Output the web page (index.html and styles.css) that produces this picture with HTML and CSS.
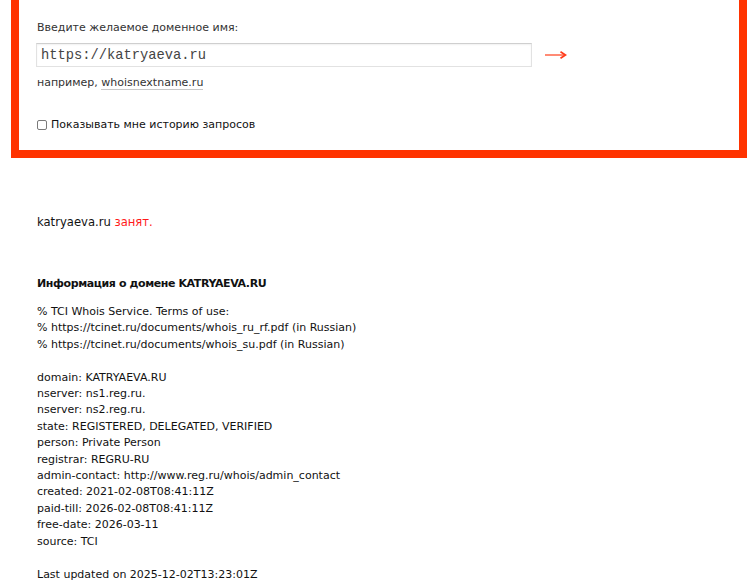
FILE: index.html
```html
<!DOCTYPE html>
<html lang="ru">
<head>
<meta charset="utf-8">
<title>Whois katryaeva.ru</title>
<link rel="stylesheet" href="styles.css">
</head>
<body>
<form class="search-box">
  <div class="search-label">Введите желаемое доменное имя:</div>
  <div class="search-row">
    <input class="search-input" type="text" value="https://katryaeva.ru">
    <button class="search-go" type="button" aria-label="Проверить">
      <svg width="22" height="10" viewBox="0 0 22 10"><path d="M0 5H19" stroke="#ff5a3a" stroke-width="1.4"/><path d="M15.5 1.8L20.5 5L15.5 8.2" fill="none" stroke="#ff3a1a" stroke-width="1.7"/></svg>
    </button>
  </div>
  <div class="search-hint">например, <a class="hint-link" href="#">whoisnextname.ru</a></div>
  <label class="history"><input class="history-box" type="checkbox"> Показывать мне историю запросов</label>
</form>

<div class="result">
  <p class="status">katryaeva.ru <span class="busy">занят.</span></p>
  <h2 class="info-title">Информация о домене KATRYAEVA.RU</h2>
  <div class="whois">% TCI Whois Service. Terms of use:
% https://tcinet.ru/documents/whois_ru_rf.pdf (in Russian)
% https://tcinet.ru/documents/whois_su.pdf (in Russian)

domain: KATRYAEVA.RU
nserver: ns1.reg.ru.
nserver: ns2.reg.ru.
state: REGISTERED, DELEGATED, VERIFIED
person: Private Person
registrar: REGRU-RU
admin-contact: http://www.reg.ru/whois/admin_contact
created: 2021-02-08T08:41:11Z
paid-till: 2026-02-08T08:41:11Z
free-date: 2026-03-11
source: TCI

Last updated on 2025-12-02T13:23:01Z</div>
</div>
</body>
</html>
```

FILE: styles.css
```css
html, body {
  margin: 0;
  padding: 0;
  background: #fff;
}
body {
  font-family: "DejaVu Sans", Verdana, sans-serif;
  font-size: 11px;
  line-height: 16px;
  color: #111;
}
.search-box {
  margin: 0 9px 0 11px;
  border: 8px solid #ff3300;
  border-top: 0;
  padding: 20px 18px 17px 18px;
}
.search-label {
  color: #333;
}
.search-row {
  display: flex;
  align-items: center;
  margin-top: 7px;
}
.search-input {
  box-sizing: border-box;
  width: 496px;
  height: 24px;
  margin: 0 0 0 -1px;
  padding: 0 4px;
  border: 1px solid #e2e2e2;
  border-top-color: #cfcfcf;
  box-shadow: inset 0 1px 2px rgba(0,0,0,0.06);
  font-family: "Liberation Mono", "Courier New", monospace;
  font-size: 13.75px;
  color: #444;
  outline: none;
}
.search-go {
  margin-left: 13px;
  padding: 0;
  border: 0;
  background: none;
  display: flex;
}
.search-hint {
  margin-top: 8px;
  color: #333;
}
.hint-link {
  color: #333;
  text-decoration: none;
  border-bottom: 1px solid #c8c8c8;
}
.history {
  display: flex;
  align-items: center;
  margin-top: 26px;
  color: #111;
}
.history-box {
  appearance: none;
  -webkit-appearance: none;
  box-sizing: border-box;
  width: 10px;
  height: 10px;
  margin: 0 4px 0 0;
  border: 1px solid #7a7a7a;
  border-radius: 2px;
  background: #fff;
}
.result {
  padding: 56px 37px 0 37px;
}
.status {
  margin: 0;
  font-size: 11.6px;
}
.busy {
  color: #ff1a1a;
}
.info-title {
  margin: 46px 0 0 0;
  font-size: 11px;
  font-weight: bold;
  letter-spacing: -0.4px;
  line-height: 16px;
}
.whois {
  margin-top: 12px;
  white-space: pre-line;
  line-height: 16.4px;
}
```
